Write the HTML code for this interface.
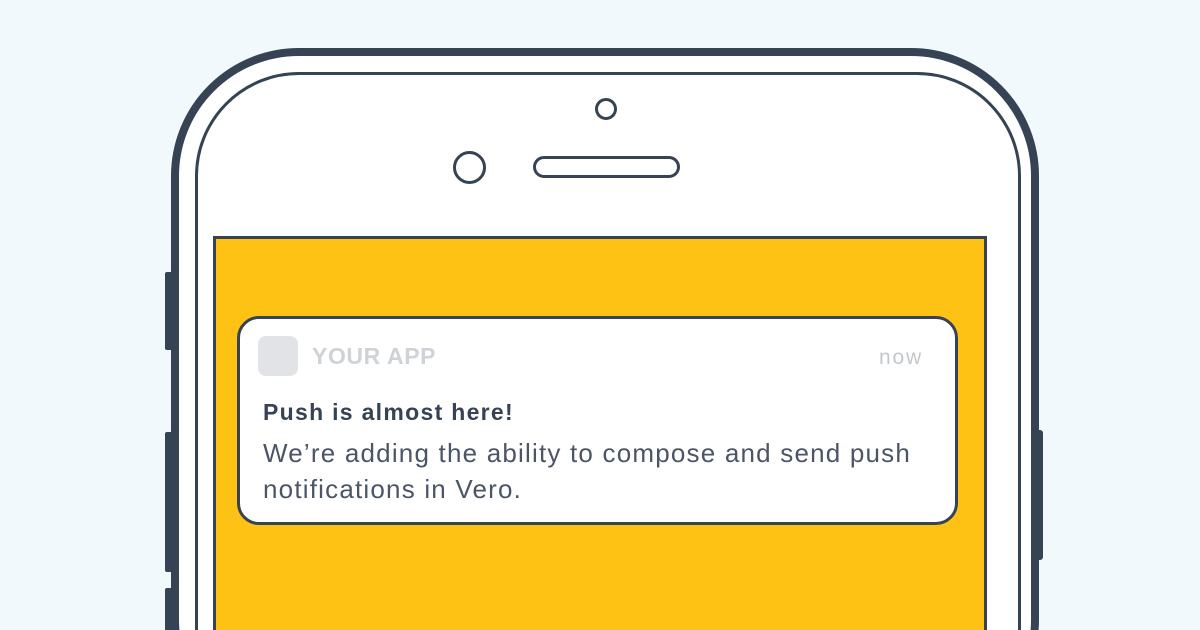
<!DOCTYPE html>
<html><head><meta charset="utf-8"><style>
html,body{margin:0;padding:0;width:1200px;height:630px;overflow:hidden;background:#f2f9fc;font-family:"Liberation Sans",sans-serif;}
#w{position:relative;width:1200px;height:630px;overflow:hidden;}
.a{position:absolute;box-sizing:border-box;}
</style></head><body><div id="w">
<div class="a" style="left:165px;top:272px;width:10px;height:78px;background:#364354;border-radius:2px"></div>
<div class="a" style="left:165px;top:432px;width:10px;height:140px;background:#364354;border-radius:2px"></div>
<div class="a" style="left:165px;top:588px;width:10px;height:60px;background:#364354;border-radius:2px"></div>
<div class="a" style="left:1028px;top:430px;width:15px;height:130px;background:#364354;border-radius:3px"></div>
<div class="a" style="left:171px;top:48px;width:868px;height:700px;border:8px solid #364354;border-radius:128px;background:#fff"></div>
<div class="a" style="left:195px;top:72px;width:826px;height:660px;border:3px solid #364354;border-radius:104px;background:#fff"></div>
<div class="a" style="left:595px;top:98px;width:22px;height:22px;border:3px solid #364354;border-radius:50%"></div>
<div class="a" style="left:453px;top:151px;width:33px;height:33px;border:3px solid #364354;border-radius:50%"></div>
<div class="a" style="left:533px;top:156px;width:147px;height:22px;border:3px solid #364354;border-radius:11px"></div>
<div class="a" style="left:213px;top:236px;width:774px;height:420px;border:3px solid #364354;background:#fec214"></div>
<div class="a" style="left:237px;top:316px;width:721px;height:209px;border:3px solid #364354;border-radius:22px;background:#fff"></div>
<div class="a" style="left:258px;top:336px;width:40px;height:40px;border-radius:8px;background:#e1e3e7"></div>
<div class="a" style="left:312px;top:342px;font-size:23px;font-weight:bold;color:#cfd2d7;line-height:28px;letter-spacing:0.6px">YOUR APP</div>
<div class="a" style="left:879px;top:345px;font-size:21px;color:#c3c7cd;line-height:26px;letter-spacing:1.8px">now</div>
<div class="a" style="left:263px;top:398px;font-size:23px;font-weight:bold;color:#364354;line-height:28px;letter-spacing:1.3px">Push is almost here!</div>
<div class="a" style="left:263px;top:435px;width:700px;font-size:26px;color:#4a5567;line-height:36px;letter-spacing:1.2px">We’re adding the ability to compose and send push<br>notifications in Vero.</div>
</div></body></html>
